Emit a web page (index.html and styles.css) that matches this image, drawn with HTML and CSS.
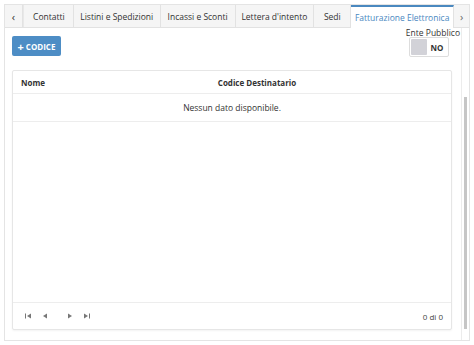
FILE: index.html
```html
<!DOCTYPE html>
<html lang="it">

<head>
    <meta charset="UTF-8">
    <meta name="viewport" content="width=device-width, initial-scale=1.0">
    <title>Fatturazione Elettronica</title>
    <link rel="stylesheet" href="styles.css">
</head>

<body>
    <!-- scheda con le tab -->
    <div class="card">
        <div class="tabs">
            <a class="tab-arrow" href="javascript:;">&lsaquo;</a>
            <a class="tab" href="javascript:;">Contatti</a>
            <a class="tab" href="javascript:;">Listini e Spedizioni</a>
            <a class="tab" href="javascript:;">Incassi e Sconti</a>
            <a class="tab" href="javascript:;">Lettera d'intento</a>
            <a class="tab" href="javascript:;">Sedi</a>
            <a class="tab active" href="javascript:;">Fatturazione Elettronica</a>
            <a class="tab-arrow right" href="javascript:;">&rsaquo;</a>
        </div>

        <div class="body">
            <div class="content">
                <!-- barra superiore -->
                <div class="toolbar">
                    <button class="btn-add"><span class="plus">+</span> CODICE</button>
                    <div class="switch-box">
                        <span class="switch-label">Ente Pubblico</span>
                        <div class="switch">
                            <span class="knob"></span>
                            <span class="switch-text">NO</span>
                        </div>
                    </div>
                </div>

                <!-- tabella -->
                <div class="grid">
                    <div class="grid-head">
                        <div class="col-name">Nome</div>
                        <div class="col-code">Codice Destinatario</div>
                    </div>
                    <div class="grid-empty">Nessun dato disponibile.</div>
                    <div class="grid-space"></div>
                    <div class="grid-foot">
                        <div class="pager">
                            <svg width="6" height="6" viewBox="0 0 6 6"><rect x="0" y="0.5" width="1" height="5" fill="#777"/><path d="M6 0.5 L2 3 L6 5.5 Z" fill="#777"/></svg>
                            <svg width="6" height="6" viewBox="0 0 6 6"><path d="M5 0.5 L1 3 L5 5.5 Z" fill="#777"/></svg>
                            <svg class="next" width="6" height="6" viewBox="0 0 6 6"><path d="M1 0.5 L5 3 L1 5.5 Z" fill="#777"/></svg>
                            <svg width="6" height="6" viewBox="0 0 6 6"><path d="M0 0.5 L4 3 L0 5.5 Z" fill="#777"/><rect x="5" y="0.5" width="1" height="5" fill="#777"/></svg>
                        </div>
                        <div class="count">0 di 0</div>
                    </div>
                </div>
            </div>
            <!-- barra di scorrimento -->
            <div class="rail">
                <div class="thumb"></div>
            </div>
        </div>
    </div>
</body>

</html>
```

FILE: styles.css
```css
* {
    padding: 0;
    margin: 0;
    box-sizing: border-box;
}

body {
    padding: 4px;
    font-family: "Open Sans", "Liberation Sans", sans-serif;
    color: #333;
    background: #fff;
}

.card {
    width: 466px;
    height: 337px;
    border: 1px solid #e4e4e4;
    display: flex;
    flex-direction: column;
}

/* tab */
.tabs {
    display: flex;
    height: 23px;
    background-color: #f5f5f5;
    border-bottom: 1px solid #e2e2e2;
}

.tabs a {
    text-decoration: none;
    color: #333;
    font-size: 8.5px;
    white-space: nowrap;
    display: flex;
    align-items: center;
    justify-content: center;
    border-right: 1px solid #e2e2e2;
}

.tab-arrow {
    width: 18px;
    font-size: 11px !important;
    box-shadow: 1px 0 0 #e8e8e8;
    margin-right: 2px;
}

.tab-arrow.right {
    width: 15px;
    border-right: none !important;
    color: #666 !important;
    margin-right: 0;
    box-shadow: none;
}

.tab:nth-child(2) { width: 49px; }
.tab:nth-child(3) { width: 87px; }
.tab:nth-child(4) { width: 75px; }
.tab:nth-child(5) { width: 79px; }
.tab:nth-child(6) { width: 37px; }

.tab.active {
    width: 103px;
    background-color: #fff;
    color: #4a88bf !important;
    border-top: 2px solid #4a88bf;
    margin-bottom: -1px;
    padding-bottom: 1px;
}

/* corpo */
.body {
    flex: 1;
    display: flex;
}

.content {
    flex: 1;
    padding: 0 9px 10px 7px;
    display: flex;
    flex-direction: column;
}

.toolbar {
    display: flex;
    justify-content: space-between;
    align-items: flex-start;
    height: 42px;
}

.btn-add {
    margin-top: 8px;
    width: 49px;
    height: 20px;
    border: none;
    border-radius: 2px;
    background-color: #4d8dc5;
    color: #fff;
    font-family: inherit;
    font-size: 8px;
    font-weight: bold;
    display: flex;
    align-items: center;
    justify-content: center;
    gap: 2px;
}

.plus {
    font-size: 11px;
    line-height: 1;
}

.switch-box {
    display: flex;
    flex-direction: column;
    align-items: center;
    margin-right: -8px;
}

.switch-label {
    font-size: 8.5px;
    line-height: 9px;
}

.switch {
    width: 40px;
    height: 20px;
    margin-right: 8px;
    border: 1px solid #ddd;
    border-radius: 2px;
    display: flex;
    align-items: center;
    padding: 1px;
}

.knob {
    width: 16px;
    height: 16px;
    background-color: #d2d2d8;
    border-radius: 1px;
}

.switch-text {
    flex: 1;
    text-align: center;
    font-size: 8px;
    font-weight: bold;
}

/* tabella */
.grid {
    flex: 1;
    border: 1px solid #e6e6e6;
    border-radius: 2px;
    box-shadow: 0 1px 2px rgba(0, 0, 0, 0.05);
    display: flex;
    flex-direction: column;
    font-size: 8.5px;
}

.grid-head {
    height: 23px;
    display: flex;
    align-items: center;
    border-bottom: 1px solid #ededed;
    font-weight: bold;
    font-size: 8px;
}

.col-name {
    width: 80px;
    padding-left: 8px;
}

.col-code {
    flex: 1;
    text-align: center;
    padding-right: 30px;
}

.grid-empty {
    height: 28px;
    display: flex;
    align-items: center;
    justify-content: center;
    border-bottom: 1px solid #ededed;
}

.grid-space {
    flex: 1;
}

.grid-foot {
    height: 27px;
    border-top: 1px solid #ededed;
    display: flex;
    align-items: center;
    justify-content: space-between;
    padding: 0 8px 0 12px;
}

.pager {
    display: flex;
    align-items: center;
    gap: 11px;
}

.pager .next {
    margin-left: 8px;
}

.count {
    font-size: 8px;
    color: #444;
}

/* barra di scorrimento */
.rail {
    width: 8px;
    border-left: 1px solid #ececec;
    padding: 69px 2px 11px 2px;
}

.thumb {
    height: 100%;
    width: 3px;
    background-color: #c6c6c6;
}
```
